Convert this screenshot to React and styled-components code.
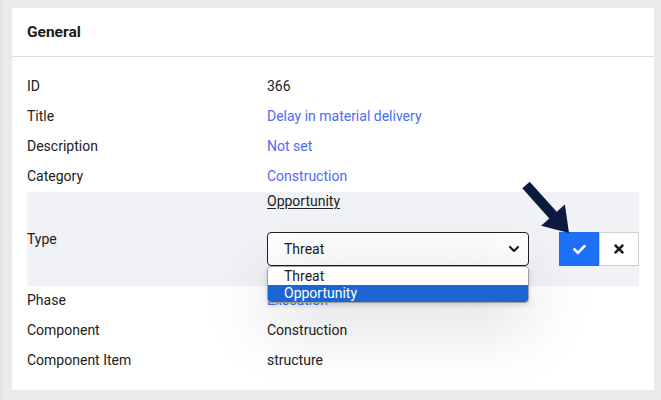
import React, { useState } from 'react';
import styled, { createGlobalStyle } from 'styled-components';
import { FaCheck, FaTimes } from 'react-icons/fa';

const GlobalStyle = createGlobalStyle`
  html, body {
    margin: 0;
    padding: 0;
    background: #ebebeb;
  }
  body {
    font-family: Roboto, "Noto Sans", Arial, sans-serif;
    font-size: 14px;
    color: #212121;
  }
`;

const fields = [
  { label: 'ID', value: '366' },
  { label: 'Title', value: 'Delay in material delivery', link: true },
  { label: 'Description', value: 'Not set', link: true },
  { label: 'Category', value: 'Construction', link: true },
  { label: 'Type', editing: true },
  { label: 'Phase', value: 'Execution', link: true },
  { label: 'Component', value: 'Construction' },
  { label: 'Component Item', value: 'structure' },
];

const typeOptions = ['Threat', 'Opportunity'];

const App = () => {
  const [selected, setSelected] = useState('Threat');
  const [hovered, setHovered] = useState('Opportunity');

  return (
    <>
      <GlobalStyle />
      <Page>
        <Card>
          <Header>General</Header>
          <Body>
            {fields.map((f) =>
              f.editing ? (
                <EditRow key={f.label}>
                  <Label>{f.label}</Label>
                  <EditCell>
                    <CurrentValue>Opportunity</CurrentValue>
                    <Editor>
                      <SelectWrap>
                        <SelectBox>
                          <span>{selected}</span>
                          <Chevron viewBox="0 0 10 6">
                            <path d="M1 1l4 4 4-4" />
                          </Chevron>
                        </SelectBox>
                        <OptionList>
                          {typeOptions.map((o) => (
                            <Option
                              key={o}
                              active={o === hovered}
                              onMouseEnter={() => setHovered(o)}
                              onClick={() => setSelected(o)}
                            >
                              {o}
                            </Option>
                          ))}
                        </OptionList>
                      </SelectWrap>
                      <Buttons>
                        <ConfirmButton>
                          <FaCheck size={13} />
                        </ConfirmButton>
                        <CancelButton>
                          <FaTimes size={14} />
                        </CancelButton>
                      </Buttons>
                    </Editor>
                  </EditCell>
                </EditRow>
              ) : (
                <Row key={f.label}>
                  <Label>{f.label}</Label>
                  <Value link={f.link}>{f.value}</Value>
                </Row>
              )
            )}
          </Body>
        </Card>
        <Pointer viewBox="0 0 661 400">
          <polygon points="527.7,181.7 554.7,211.8 562.9,204.4 567,233 539.1,225.8 547.3,218.4 520.3,188.3" />
        </Pointer>
      </Page>
    </>
  );
};

const Page = styled.div`
  position: relative;
  width: 661px;
  height: 400px;
  box-sizing: border-box;
  padding: 8px 7px 10px 12px;
  border-left: 2px solid #e3e3e3;
  overflow: hidden;
`;

const Card = styled.div`
  background: #fff;
  height: 382px;
  margin-left: -2px;
`;

const Header = styled.div`
  height: 48px;
  display: flex;
  align-items: center;
  padding: 0 15px;
  font-size: 15.5px;
  font-weight: 700;
  color: #1b1b1b;
  border-bottom: 1px solid #dcdcdc;
`;

const Body = styled.div`
  padding: 14px 15px 0;
`;

const Row = styled.div`
  display: grid;
  grid-template-columns: 240px 1fr;
  align-items: center;
  height: 30px;
`;

const EditRow = styled(Row)`
  height: 94px;
  margin-top: 1px;
  margin-bottom: -1px;
  background: #f0f2f6;
`;

const Label = styled.div`
  color: #212121;
`;

const Value = styled.div`
  color: ${(p) => (p.link ? '#4b6cf7' : '#212121')};
`;

const EditCell = styled.div`
  align-self: stretch;
  display: flex;
  flex-direction: column;
`;

const CurrentValue = styled.span`
  align-self: flex-start;
  line-height: 18px;
  margin-bottom: 22px;
  text-decoration: underline;
  text-underline-offset: 2px;
  color: #212121;
`;

const Editor = styled.div`
  display: flex;
  align-items: flex-start;
  gap: 30px;
`;

const SelectWrap = styled.div`
  position: relative;
  width: 262px;
  z-index: 5;
`;

const SelectBox = styled.div`
  height: 34px;
  box-sizing: border-box;
  display: flex;
  align-items: center;
  justify-content: space-between;
  padding: 0 9px 0 16px;
  background: #fff;
  border: 1px solid #1f1f1f;
  border-radius: 4px;
  color: #1b1b1b;
`;

const Chevron = styled.svg`
  width: 10px;
  height: 6px;
  fill: none;
  stroke: #111;
  stroke-width: 2;
  stroke-linecap: round;
  stroke-linejoin: round;
`;

const OptionList = styled.div`
  position: absolute;
  top: 34px;
  left: 0;
  width: 262px;
  box-sizing: border-box;
  padding-top: 1px;
  background: #fff;
  border: 1px solid #a0a0a0;
  border-radius: 4px;
  overflow: hidden;
  box-shadow: 0 16px 70px rgba(0, 0, 0, 0.2), 0 2px 5px rgba(0, 0, 0, 0.14);
`;

const Option = styled.div`
  height: 17px;
  line-height: 17px;
  padding-left: 16px;
  background: ${(p) => (p.active ? '#1b66d3' : '#fff')};
  color: ${(p) => (p.active ? '#fff' : '#1b1b1b')};
  cursor: default;
`;

const Buttons = styled.div`
  display: flex;
`;

const ConfirmButton = styled.button`
  width: 40px;
  height: 34px;
  display: flex;
  align-items: center;
  justify-content: center;
  border: none;
  background: #1d6ff6;
  color: #fff;
  padding: 0;
`;

const CancelButton = styled(ConfirmButton)`
  width: 40px;
  background: #fff;
  color: #1a1a1a;
  border: 1px solid #cfcfcf;
`;

const Pointer = styled.svg`
  position: absolute;
  left: 0;
  top: 0;
  width: 661px;
  height: 400px;
  pointer-events: none;
  fill: #0c1a3f;
  z-index: 10;
`;

export default App;
